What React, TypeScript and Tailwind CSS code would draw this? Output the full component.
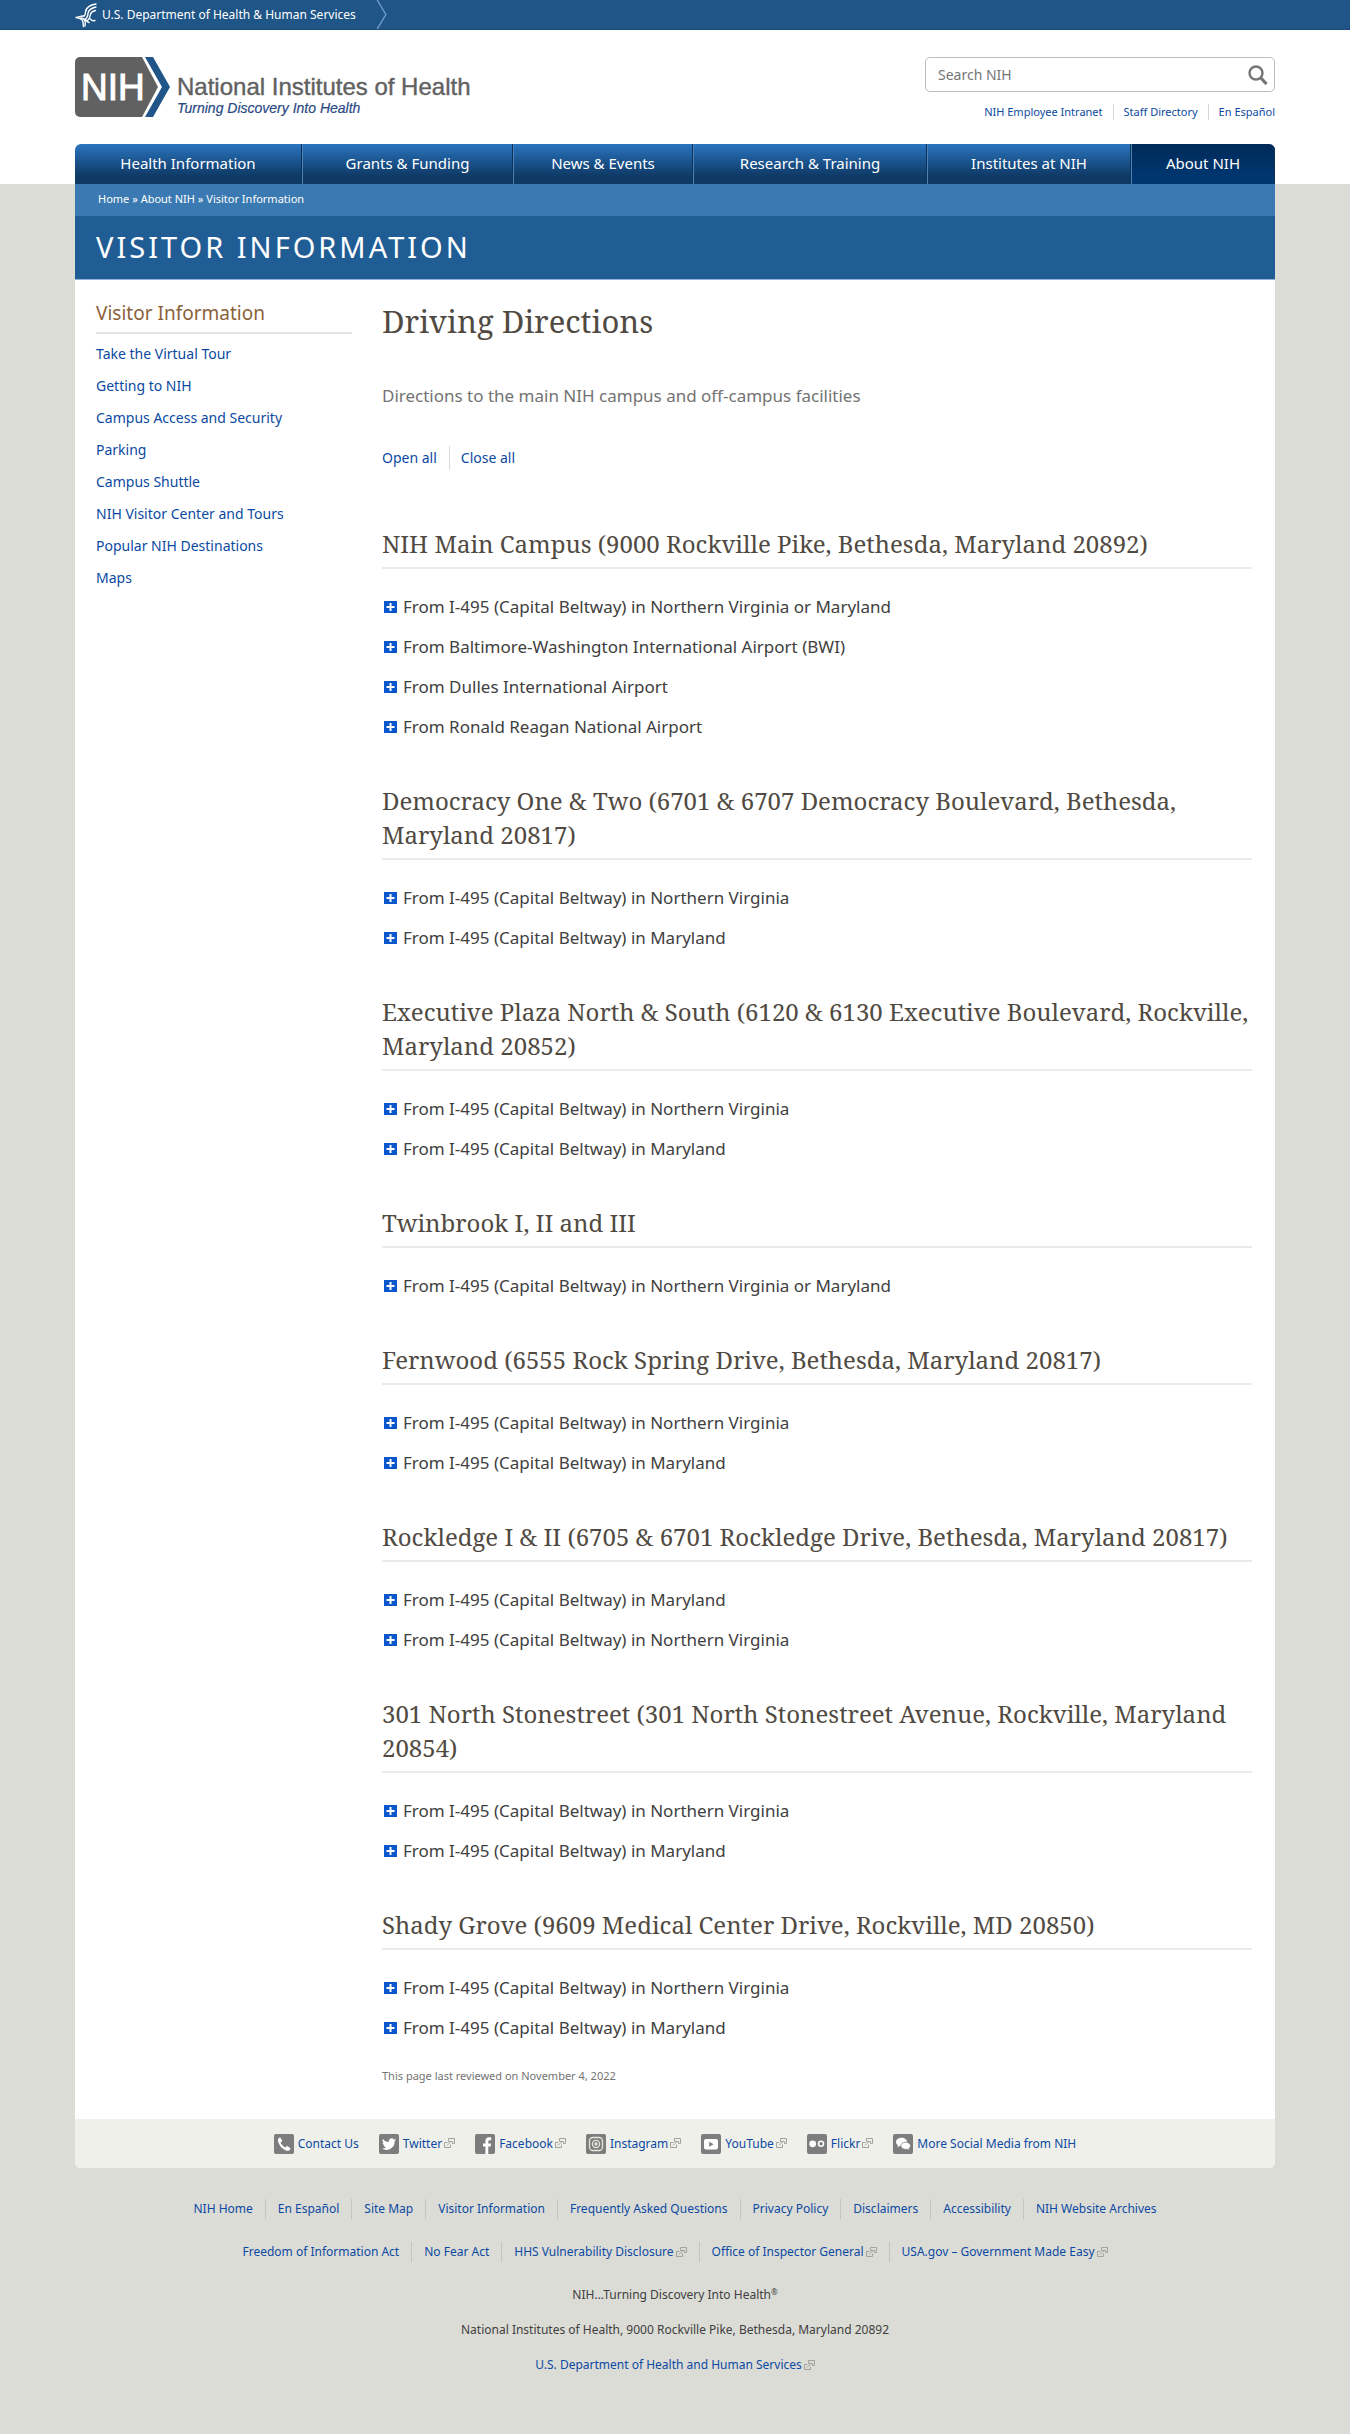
import type { ReactNode } from "react";

const sections: { title: string; items: string[] }[] = [
  {
    title: "NIH Main Campus (9000 Rockville Pike, Bethesda, Maryland 20892)",
    items: [
      "From I-495 (Capital Beltway) in Northern Virginia or Maryland",
      "From Baltimore-Washington International Airport (BWI)",
      "From Dulles International Airport",
      "From Ronald Reagan National Airport",
    ],
  },
  {
    title: "Democracy One & Two (6701 & 6707 Democracy Boulevard, Bethesda, Maryland 20817)",
    items: ["From I-495 (Capital Beltway) in Northern Virginia", "From I-495 (Capital Beltway) in Maryland"],
  },
  {
    title: "Executive Plaza North & South (6120 & 6130 Executive Boulevard, Rockville, Maryland 20852)",
    items: ["From I-495 (Capital Beltway) in Northern Virginia", "From I-495 (Capital Beltway) in Maryland"],
  },
  {
    title: "Twinbrook I, II and III",
    items: ["From I-495 (Capital Beltway) in Northern Virginia or Maryland"],
  },
  {
    title: "Fernwood (6555 Rock Spring Drive, Bethesda, Maryland 20817)",
    items: ["From I-495 (Capital Beltway) in Northern Virginia", "From I-495 (Capital Beltway) in Maryland"],
  },
  {
    title: "Rockledge I & II (6705 & 6701 Rockledge Drive, Bethesda, Maryland 20817)",
    items: ["From I-495 (Capital Beltway) in Maryland", "From I-495 (Capital Beltway) in Northern Virginia"],
  },
  {
    title: "301 North Stonestreet (301 North Stonestreet Avenue, Rockville, Maryland 20854)",
    items: ["From I-495 (Capital Beltway) in Northern Virginia", "From I-495 (Capital Beltway) in Maryland"],
  },
  {
    title: "Shady Grove (9609 Medical Center Drive, Rockville, MD 20850)",
    items: ["From I-495 (Capital Beltway) in Northern Virginia", "From I-495 (Capital Beltway) in Maryland"],
  },
];

const navItems = [
  "Health Information",
  "Grants & Funding",
  "News & Events",
  "Research & Training",
  "Institutes at NIH",
  "About NIH",
];

const sideLinks = [
  "Take the Virtual Tour",
  "Getting to NIH",
  "Campus Access and Security",
  "Parking",
  "Campus Shuttle",
  "NIH Visitor Center and Tours",
  "Popular NIH Destinations",
  "Maps",
];

function ExternalIcon() {
  return (
    <svg viewBox="0 0 11 11" className="ml-0.5 inline-block size-[11px]" fill="none" stroke="#a3a39c" aria-hidden="true">
      <path d="M3.500 4.500h-3v5h6v-3M4.500 .5h6v5h-2v-2h-4zM3 7.500l4-4" />
    </svg>
  );
}

function PlusIcon() {
  return (
    <svg viewBox="0 0 13 13" className="size-[13px] shrink-0" aria-hidden="true">
      <rect width="13" height="12" fill="#0a56cc" />
      <path d="M6.500 2v8M2.500 6h8" stroke="#fff" strokeWidth="2" />
    </svg>
  );
}

function SocialIcon({ children }: { children: ReactNode }) {
  return (
    <svg viewBox="0 0 20 20" className="mr-1 size-5 shrink-0" aria-hidden="true">
      <rect width="20" height="20" rx="2" fill="#7d7d7d" />
      {children}
    </svg>
  );
}

const socials: { label: string; external: boolean; art: ReactNode }[] = [
  {
    label: "Contact Us",
    external: false,
    art: (
      <path
        d="M5.600 3.600c-1.600 1-2 2.500-1.300 4.700 1.200 3.600 4 6.700 7.600 8.100 2.100.8 3.700.3 4.500-1.400.2-.5.1-.8-.3-1.100l-2.500-1.700c-.4-.3-.8-.2-1.100.1l-1 1.200c-2.300-1-4-2.800-5-5l1.300-.9c.4-.3.500-.6.300-1.100L6.600 4c-.2-.5-.6-.7-1-.4z"
        fill="#fff"
      />
    ),
  },
  {
    label: "Twitter",
    external: true,
    art: (
      <path
        d="M17 5.800c-.5.200-1.100.4-1.600.5.600-.4 1-.9 1.200-1.600-.6.300-1.200.6-1.800.7A2.900 2.900 0 0 0 9.800 8C7.400 7.900 5.300 6.800 3.900 5c-.8 1.300-.3 3 .9 3.800-.5 0-.9-.1-1.300-.4 0 1.400 1 2.600 2.300 2.900-.4.100-.9.100-1.300 0 .4 1.200 1.400 2 2.700 2A6 6 0 0 1 3 14.600a8.200 8.200 0 0 0 12.600-7.300c.6-.4 1-.9 1.400-1.500z"
        fill="#fff"
      />
    ),
  },
  {
    label: "Facebook",
    external: true,
    art: (
      <path
        d="M10.400 20v-7.600H8V9.400h2.400V7.200c0-2.600 1.400-3.900 3.800-3.900.9 0 1.600.1 2 .2v2.700h-1.500c-1.100 0-1.400.6-1.400 1.500v1.700h2.800l-.4 3h-2.400V20z"
        fill="#fff"
      />
    ),
  },
  {
    label: "Instagram",
    external: true,
    art: (
      <g fill="none" stroke="#e4e4e0" strokeWidth="1.300">
        <rect x="3.500" y="3.500" width="13" height="13" rx="3.500" />
        <circle cx="10" cy="10" r="3.600" />
        <circle cx="10" cy="10" r="1" fill="#e4e4e0" />
      </g>
    ),
  },
  {
    label: "YouTube",
    external: true,
    art: (
      <>
        <rect x="3" y="5" width="14" height="10.500" rx="2" fill="#fff" />
        <path d="M8.200 7.800v5l4.400-2.500z" fill="#7d7d7d" />
      </>
    ),
  },
  {
    label: "Flickr",
    external: true,
    art: (
      <>
        <circle cx="5.700" cy="9.800" r="3.400" fill="#fff" />
        <circle cx="14" cy="9.800" r="2.500" fill="none" stroke="#fff" strokeWidth="1.600" />
      </>
    ),
  },
  {
    label: "More Social Media from NIH",
    external: false,
    art: (
      <>
        <path d="M8.500 3.800c-3 0-5.500 1.800-5.500 4.200 0 1.300.8 2.500 2 3.300l-.6 2 2.400-1.200c.5.100 1.100.2 1.700.2 3 0 5.500-1.900 5.500-4.300S11.500 3.800 8.500 3.800z" fill="#fff" />
        <path d="M12.700 8.200c2.700 0 4.800 1.500 4.800 3.600 0 1.200-.6 2.100-1.600 2.800l.5 1.900-2.200-1.200c-.5.100-1 .1-1.500.1-2.700 0-4.800-1.500-4.800-3.600s2.100-3.600 4.800-3.600z" fill="#fff" stroke="#7d7d7d" strokeWidth=".8" />
      </>
    ),
  },
];

const footerRows: { label: string; external?: boolean }[][] = [
  [
    { label: "NIH Home" },
    { label: "En Español" },
    { label: "Site Map" },
    { label: "Visitor Information" },
    { label: "Frequently Asked Questions" },
    { label: "Privacy Policy" },
    { label: "Disclaimers" },
    { label: "Accessibility" },
    { label: "NIH Website Archives" },
  ],
  [
    { label: "Freedom of Information Act" },
    { label: "No Fear Act" },
    { label: "HHS Vulnerability Disclosure", external: true },
    { label: "Office of Inspector General", external: true },
    { label: "USA.gov – Government Made Easy", external: true },
  ],
];

function TopBar() {
  return (
    <div className="h-[30px] border-b border-[#1b4675] bg-[#205588]">
      <div className="mx-auto flex h-full max-w-[1200px] items-center">
        <a href="#hhs" className="flex h-full items-center gap-1 text-[12px] text-white">
          <svg viewBox="0 0 23 26" className="h-[26px] w-[23px]" fill="none" stroke="#fff" strokeWidth="1.400" strokeLinecap="round" aria-hidden="true">
            <path d="M21 2C14 3 11 6 10.500 10c-.2 2 .3 3-1.500 4" />
            <path d="M21 5c-5 1-7.500 3-8 6.500-.2 2 0 3.500-2 5" />
            <path d="M20.500 8.500c-3.500.8-5 2.300-5.300 5-.2 2-1 4-3.200 5.500" />
            <path d="M20 18.500c-2.500.5-4-.3-4.500-1.500" />
            <path d="M1 15.500c3.500-.5 5-2 8-1.500M1 15.500c2.500.7 5 .5 6.500 3 .8 1.500.5 3.500 1 6M6 16c3 .3 4 1.800 4.300 4.500l-.3 3.500M10 17c1.500 1 2 3 4 3.500" />
          </svg>
          <span>U.S. Department of Health &amp; Human Services</span>
        </a>
        <svg viewBox="0 0 12 30" className="ml-5 h-full w-3" fill="none" stroke="#6f9bc9" strokeWidth="1.500" aria-hidden="true">
          <path d="M1 0l9 15-9 15" />
        </svg>
      </div>
    </div>
  );
}

function Logo() {
  return (
    <a href="#home" aria-label="National Institutes of Health: Turning Discovery Into Health">
      <svg viewBox="0 0 400 60" className="h-[60px] w-[400px]" fontFamily="'Liberation Sans', Arial, sans-serif">
        <path d="M5 0h62l16 30-16 30H5a5 5 0 0 1-5-5V5a5 5 0 0 1 5-5z" fill="#616161" />
        <path d="M70 0h8l17 30-17 30h-8l17-30z" fill="#20558a" />
        <text x="6" y="43" fontSize="37" fill="#fff" stroke="#fff" strokeWidth="1">NIH</text>
        <text x="102" y="38" fontSize="24" fill="#616161" stroke="#616161" strokeWidth=".4">National Institutes of Health</text>
        <text x="102" y="56" fontSize="14" fontStyle="italic" fill="#2b4a85" stroke="#2b4a85" strokeWidth=".2">Turning Discovery Into Health</text>
      </svg>
    </a>
  );
}

function Header() {
  return (
    <header className="mx-auto flex h-[114px] max-w-[1200px] items-start justify-between pt-[27px]">
      <Logo />
      <div className="flex w-[350px] flex-col gap-3">
        <form role="search" className="flex h-[35px] items-center rounded-[5px] border border-[#bdbdbd] bg-white">
          <input
            type="search"
            aria-label="Search NIH"
            placeholder="Search NIH"
            className="h-full min-w-0 flex-1 bg-transparent pl-3 text-sm outline-none placeholder:text-[#757575]"
          />
          <button type="submit" aria-label="Search" className="mr-1.5">
            <svg viewBox="0 0 20 20" className="size-5" fill="none" stroke="#757575" aria-hidden="true">
              <circle cx="8" cy="8" r="6.500" strokeWidth="2.400" />
              <path d="M12.500 12.500l6 6.500" strokeWidth="3.200" />
            </svg>
          </button>
        </form>
        <ul className="flex justify-end text-[11px] leading-4 text-[#0b4aa2]">
          <li className="pr-2.5"><a href="#intranet">NIH Employee Intranet</a></li>
          <li className="border-l border-[#d5d5d5] px-2.5"><a href="#staff">Staff Directory</a></li>
          <li className="border-l border-[#d5d5d5] pl-2.5"><a href="#es">En Español</a></li>
        </ul>
      </div>
    </header>
  );
}

function MainNav() {
  return (
    <nav className="mx-auto max-w-[1200px]">
      <ul className="grid grid-cols-[227fr_211fr_180fr_234fr_204fr_144fr] overflow-hidden rounded-t-[6px] text-[15px] text-white">
        {navItems.map((item) => (
          <li
            key={item}
            className="border-l border-[#4d82b8] bg-linear-to-b from-[#2a75c0] to-[#0f3a66] to-80% first:border-l-0 last:from-[#002a57] last:to-[#003670]"
          >
            <a href="#nav" className="flex h-10 items-center justify-center border-r border-[#0d3258] pb-0.5">{item}</a>
          </li>
        ))}
      </ul>
    </nav>
  );
}

export default function App() {
  return (
    <div className="min-h-screen bg-[#dcdcd6] font-['Noto_Sans','Open_Sans',sans-serif] text-[#404040]">
      <div className="bg-white">
        <TopBar />
        <Header />
        <MainNav />
      </div>

      <div className="mx-auto max-w-[1200px] overflow-hidden rounded-b-[6px] bg-white">
        <nav aria-label="Breadcrumb" className="h-8 bg-[#3a79b1] px-[23px] text-[11px] leading-[30px] text-white">
          <a href="#home">Home</a> » <a href="#about">About NIH</a> » <a href="#visitor">Visitor Information</a>
        </nav>
        <div className="h-16 border-b border-[#8fb2d6] bg-[#215d95] px-[21px] text-[29px] leading-[62px] tracking-[3px] text-white uppercase">
          Visitor Information
        </div>

        <div className="flex gap-[30px] pr-[23px] pl-[21px]">
          <aside className="w-[256px] shrink-0 pt-[18px]">
            <h2 className="border-b-2 border-[#e5e5e5] pb-1 text-[19px] leading-[30px] text-[#8b6239]">
              <a href="#visitor">Visitor Information</a>
            </h2>
            <ul className="pt-1 text-sm text-[#0b4aa2]">
              {sideLinks.map((link) => (
                <li key={link} className="leading-8">
                  <a href="#side">{link}</a>
                </li>
              ))}
            </ul>
          </aside>

          <main className="min-w-0 flex-1 pt-[18px]">
            <h1 className="font-['Noto_Serif','Liberation_Serif',serif] text-[31px] leading-[46px] text-[#504a42]">Driving Directions</h1>
            <p className="mt-[38px] text-[17px] leading-7 text-[#737373]">Directions to the main NIH campus and off-campus facilities</p>
            <div className="mt-9 flex text-sm leading-6 text-[#0b4aa2]">
              <button type="button" className="pr-3">Open all</button>
              <button type="button" className="border-l border-[#d9d9e3] pl-[11px]">Close all</button>
            </div>
            <div className="mt-[57px] flex flex-col gap-[37px]">
              {sections.map((s) => (
                <section key={s.title}>
                  <h2 className="border-b-2 border-[#ebebeb] pb-1.5 font-['Noto_Serif','Liberation_Serif',serif] text-2xl leading-[34px] text-[#504a42]">
                    {s.title}
                  </h2>
                  <ul className="pt-[18px]">
                    {s.items.map((item) => (
                      <li key={item}>
                        <button type="button" aria-expanded="false" className="flex h-10 items-center gap-1.5 pl-0.5 text-left text-[17px] leading-6">
                          <PlusIcon />
                          {item}
                        </button>
                      </li>
                    ))}
                  </ul>
                </section>
              ))}
            </div>
            <p className="mt-[18px] pb-[33px] text-[11px] leading-5 text-[#737373]">This page last reviewed on November 4, 2022</p>
          </main>
        </div>

        <ul className="flex h-[49px] items-center justify-center gap-5 bg-[#f0f0eb] text-[12px] text-[#0b4aa2]">
          {socials.map((s) => (
            <li key={s.label}>
              <a href="#social" className="flex items-center">
                <SocialIcon>{s.art}</SocialIcon>
                {s.label}
                {s.external && <ExternalIcon />}
              </a>
            </li>
          ))}
        </ul>
      </div>

      <footer className="mx-auto flex max-w-[1200px] flex-col items-center pt-[31px] text-[12px] leading-5">
        {footerRows.map((row, i) => (
          <ul key={i} className="mb-[23px] flex text-[#0b4aa2]">
            {row.map((f) => (
              <li key={f.label} className="border-l border-[#c4c4be] px-3 first:border-l-0">
                <a href="#footer">
                  {f.label}
                  {f.external && <ExternalIcon />}
                </a>
              </li>
            ))}
          </ul>
        ))}
        <p>NIH...Turning Discovery Into Health<sup className="text-[8px]">®</sup></p>
        <p className="mt-[15px]">National Institutes of Health, 9000 Rockville Pike, Bethesda, Maryland 20892</p>
        <p className="mt-[15px] pb-[58px] text-[#0b4aa2]">
          <a href="#hhs">U.S. Department of Health and Human Services<ExternalIcon /></a>
        </p>
      </footer>
    </div>
  );
}
